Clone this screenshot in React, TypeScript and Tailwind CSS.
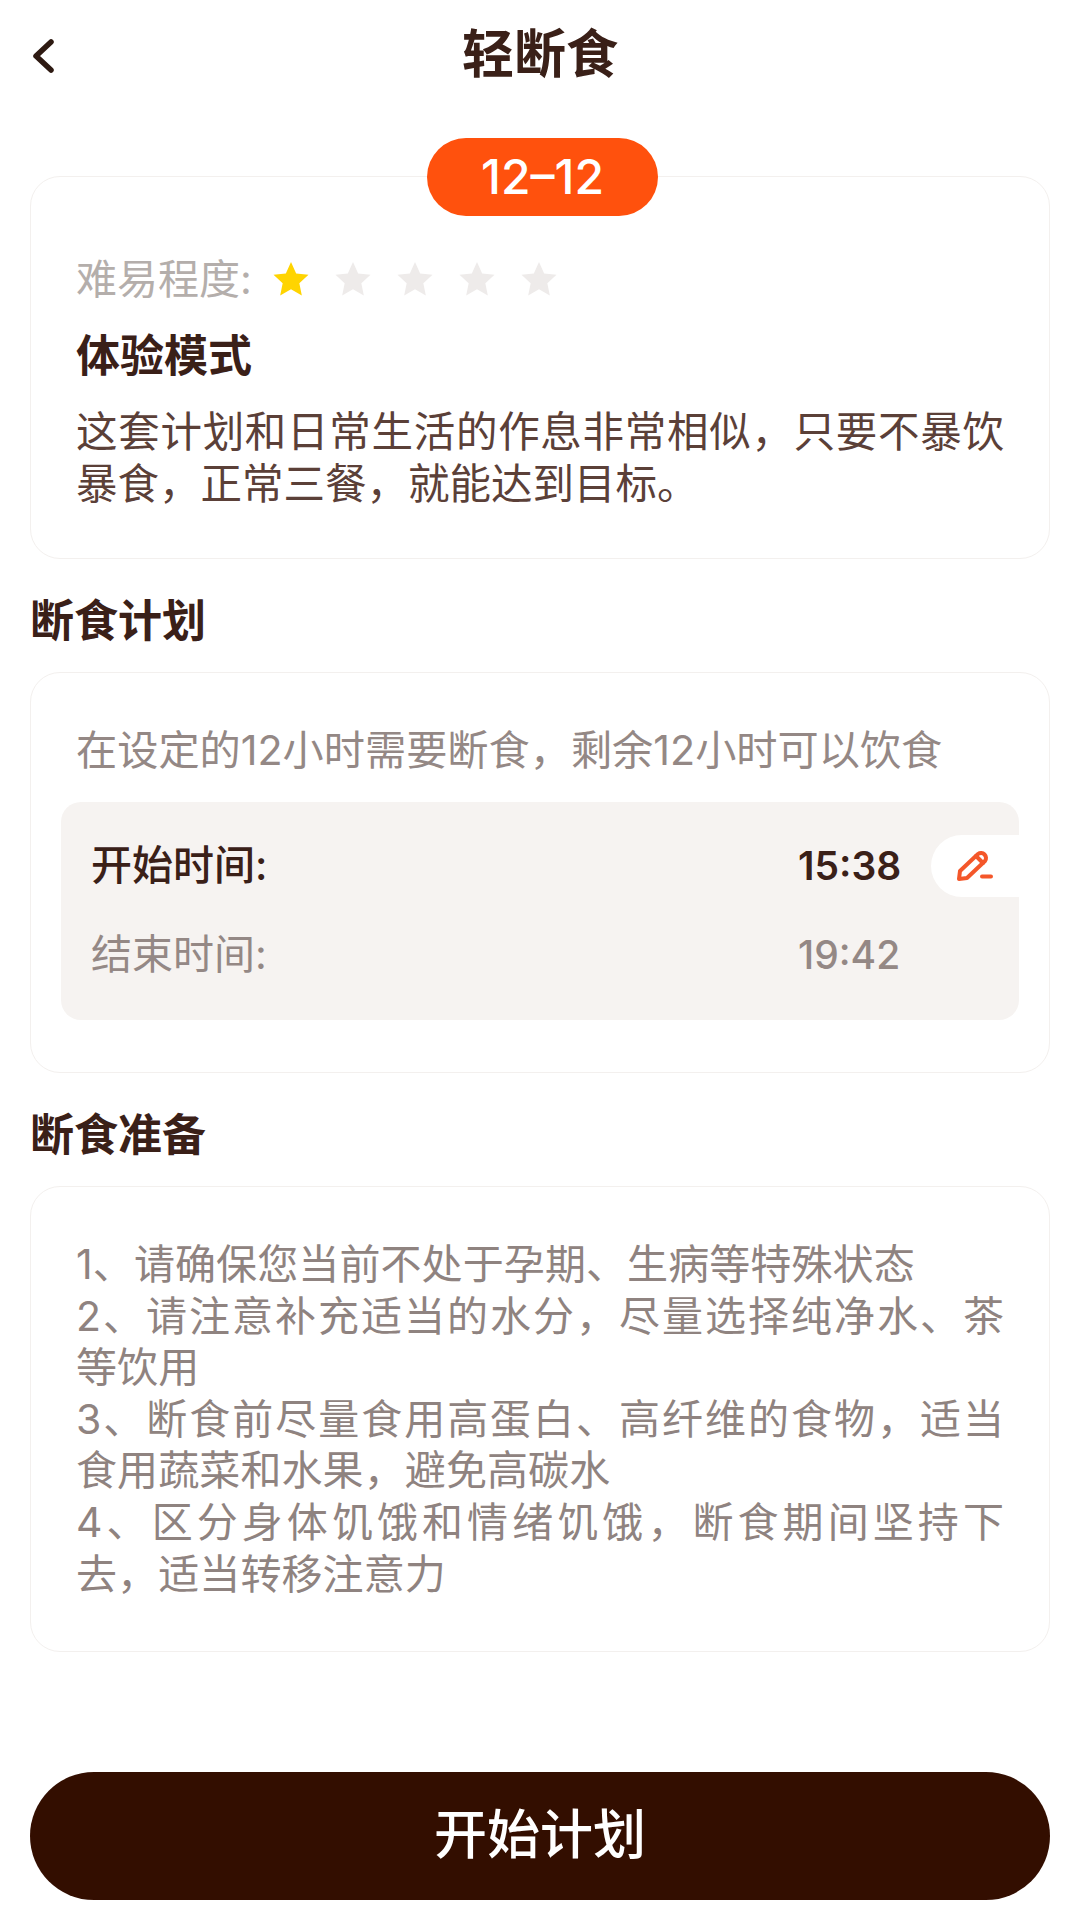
const FONT = "font-['Inter','Noto_Sans_CJK_SC',sans-serif]";

const Star = ({ on }: { on: boolean }) => (
  <svg width="40" height="40" viewBox="0 0 24 24">
    <path
      d="M12 1.8l3.1 6.9 7.4.8-5.5 5 1.5 7.4-6.5-3.8-6.5 3.8 1.5-7.4-5.5-5 7.4-.8z"
      fill={on ? "#ffd400" : "#eeebea"}
    />
  </svg>
);

const tips = [
  "1、请确保您当前不处于孕期、生病等特殊状态",
  "2、请注意补充适当的水分，尽量选择纯净水、茶等饮用",
  "3、断食前尽量食用高蛋白、高纤维的食物，适当食用蔬菜和水果，避免高碳水",
  "4、区分身体饥饿和情绪饥饿，断食期间坚持下去，适当转移注意力",
];

export default function App() {
  return (
    <div className={`${FONT} w-[1080px] h-[1920px] bg-white flex flex-col px-[30px] text-[#3a2018]`}>
      <header className="relative h-[110px] flex items-center justify-center">
        <svg className="absolute left-0 top-[36px]" width="28" height="40" viewBox="0 0 28 40" fill="none">
          <path d="M21 6L6 20l15 14" stroke="#2e1a12" strokeWidth="5.5" strokeLinecap="round" strokeLinejoin="round" />
        </svg>
        <h1 className="text-[52px] font-bold leading-none">轻断食</h1>
      </header>

      <section className="relative mt-[66px] h-[383px] rounded-[30px] border border-[#f3f0ee] pt-[82px] px-[45px]">
        <div className="absolute left-[396px] top-[-39px] w-[231px] h-[78px] rounded-full bg-[#ff510d] flex items-center justify-center text-white text-[48px] font-medium">
          12–12
        </div>
        <div className="flex items-center h-[40px]">
          <span className="text-[41px] leading-none text-[#b4aeab] w-[195px] whitespace-nowrap">难易程度:</span>
          <div className="flex gap-[22px]">
            <Star on />
            <Star on={false} />
            <Star on={false} />
            <Star on={false} />
            <Star on={false} />
          </div>
        </div>
        <h2 className="mt-[34px] text-[44px] leading-[46px] font-semibold">体验模式</h2>
        <p className="mt-[27px] text-[41.5px] leading-[52px] text-justify text-[#5b4038] w-[928px]">
          这套计划和日常生活的作息非常相似，只要不暴饮暴食，正常三餐，就能达到目标。
        </p>
      </section>

      <h2 className="mt-[38px] text-[44px] leading-[48px] font-semibold">断食计划</h2>

      <section className="mt-[27px] h-[401px] rounded-[30px] border border-[#f3f0ee] pt-[55px] px-[30px]">
        <p className="pl-[15px] text-[41.2px] leading-[44px] text-[#948885] whitespace-nowrap">
          在设定的12小时需要断食，剩余12小时可以饮食
        </p>
        <div className="relative mt-[30px] h-[218px] rounded-[20px] bg-[#f6f3f1] pl-[30px] pt-[40px]">
          <div className="flex items-center h-[48px] text-[#3a2018] font-medium">
            <span className="text-[41px] w-[707px]">开始时间:</span>
            <span className="text-[39px] font-semibold">15:38</span>
          </div>
          <div className="flex items-center h-[48px] mt-[41px] text-[#948885]">
            <span className="text-[41px] w-[707px]">结束时间:</span>
            <span className="text-[39px] font-medium">19:42</span>
          </div>
          <div className="absolute right-0 top-[33px] w-[88px] h-[62px] rounded-l-full bg-white flex items-center pl-[25px]">
            <svg width="37" height="32" viewBox="0 0 37 32" fill="none" stroke="#f4572a" strokeWidth="4" strokeLinecap="round" strokeLinejoin="round">
              <path d="M3 29l1-8L22 4a5 5 0 0 1 7 7L11 28z" />
              <path d="M20 6l7 7" />
              <path d="M26 26.5h9" />
            </svg>
          </div>
        </div>
      </section>

      <h2 className="mt-[38px] text-[44px] leading-[48px] font-semibold">断食准备</h2>

      <section className="mt-[27px] h-[466px] rounded-[30px] border border-[#f3f0ee] pt-[52px] px-[45px] text-[41px] tracking-[0.1px] leading-[51.6px] text-[#8f8380]">
        {tips.map((t) => (
          <p key={t} className="text-justify w-[928px]">
            {t}
          </p>
        ))}
      </section>

      <button className="mt-auto mb-[20px] h-[128px] rounded-full bg-[#330e00] text-white text-[53px] font-medium">
        开始计划
      </button>
    </div>
  );
}
